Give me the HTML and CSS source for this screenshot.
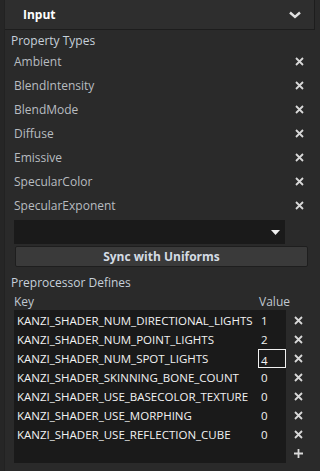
FILE: index.html
```html
<!DOCTYPE html>
<html>
<head>
<meta charset="utf-8">
<link rel="stylesheet" href="styles.css">
</head>
<body>
<div class="panel">
  <div class="gutter"></div>
  <div class="main">
    <div class="header">
      <span class="title">Input</span>
      <svg class="chev" width="12" height="8" viewBox="0 0 12 8"><path d="M1 1.5 L6 6 L11 1.5" fill="none" stroke="#e0e0e0" stroke-width="2.4"/></svg>
    </div>
    <div class="section-label">Property Types</div>
    <div class="prop-list">
      <div class="prop"><span>Ambient</span><svg class="x" width="9" height="9" viewBox="0 0 9 9"><path d="M1 1L8 8M8 1L1 8" stroke="#d8d8d8" stroke-width="1.8"/></svg></div>
      <div class="prop"><span>BlendIntensity</span><svg class="x" width="9" height="9" viewBox="0 0 9 9"><path d="M1 1L8 8M8 1L1 8" stroke="#d8d8d8" stroke-width="1.8"/></svg></div>
      <div class="prop"><span>BlendMode</span><svg class="x" width="9" height="9" viewBox="0 0 9 9"><path d="M1 1L8 8M8 1L1 8" stroke="#d8d8d8" stroke-width="1.8"/></svg></div>
      <div class="prop"><span>Diffuse</span><svg class="x" width="9" height="9" viewBox="0 0 9 9"><path d="M1 1L8 8M8 1L1 8" stroke="#d8d8d8" stroke-width="1.8"/></svg></div>
      <div class="prop"><span>Emissive</span><svg class="x" width="9" height="9" viewBox="0 0 9 9"><path d="M1 1L8 8M8 1L1 8" stroke="#d8d8d8" stroke-width="1.8"/></svg></div>
      <div class="prop"><span>SpecularColor</span><svg class="x" width="9" height="9" viewBox="0 0 9 9"><path d="M1 1L8 8M8 1L1 8" stroke="#d8d8d8" stroke-width="1.8"/></svg></div>
      <div class="prop"><span>SpecularExponent</span><svg class="x" width="9" height="9" viewBox="0 0 9 9"><path d="M1 1L8 8M8 1L1 8" stroke="#d8d8d8" stroke-width="1.8"/></svg></div>
    </div>
    <div class="dropdown">
      <svg width="9" height="5" viewBox="0 0 9 5"><path d="M0 0H9L4.5 5Z" fill="#f0f0f0"/></svg>
    </div>
    <div class="btn">Sync with Uniforms</div>
    <div class="section-label pre">Preprocessor Defines</div>
    <div class="cols"><span>Key</span><span class="vcol">Value</span></div>
    <div class="defines">
      <div class="table">
        <div class="row"><span class="k">KANZI_SHADER_NUM_DIRECTIONAL_LIGHTS</span><span class="v">1</span></div>
        <div class="row"><span class="k">KANZI_SHADER_NUM_POINT_LIGHTS</span><span class="v">2</span></div>
        <div class="row"><span class="k">KANZI_SHADER_NUM_SPOT_LIGHTS</span><span class="v edit">4</span></div>
        <div class="row"><span class="k">KANZI_SHADER_SKINNING_BONE_COUNT</span><span class="v">0</span></div>
        <div class="row"><span class="k">KANZI_SHADER_USE_BASECOLOR_TEXTURE</span><span class="v">0</span></div>
        <div class="row"><span class="k">KANZI_SHADER_USE_MORPHING</span><span class="v">0</span></div>
        <div class="row"><span class="k">KANZI_SHADER_USE_REFLECTION_CUBE</span><span class="v">0</span></div>
      </div>
      <div class="actions">
        <svg class="x" width="9" height="9" viewBox="0 0 9 9"><path d="M1 1L8 8M8 1L1 8" stroke="#d8d8d8" stroke-width="1.8"/></svg>
        <svg class="x" width="9" height="9" viewBox="0 0 9 9"><path d="M1 1L8 8M8 1L1 8" stroke="#d8d8d8" stroke-width="1.8"/></svg>
        <svg class="x" width="9" height="9" viewBox="0 0 9 9"><path d="M1 1L8 8M8 1L1 8" stroke="#d8d8d8" stroke-width="1.8"/></svg>
        <svg class="x" width="9" height="9" viewBox="0 0 9 9"><path d="M1 1L8 8M8 1L1 8" stroke="#d8d8d8" stroke-width="1.8"/></svg>
        <svg class="x" width="9" height="9" viewBox="0 0 9 9"><path d="M1 1L8 8M8 1L1 8" stroke="#d8d8d8" stroke-width="1.8"/></svg>
        <svg class="x" width="9" height="9" viewBox="0 0 9 9"><path d="M1 1L8 8M8 1L1 8" stroke="#d8d8d8" stroke-width="1.8"/></svg>
        <svg class="x" width="9" height="9" viewBox="0 0 9 9"><path d="M1 1L8 8M8 1L1 8" stroke="#d8d8d8" stroke-width="1.8"/></svg>
        <svg class="x" width="9" height="9" viewBox="0 0 9 9"><path d="M4.5 0V9M0 4.5H9" stroke="#d8d8d8" stroke-width="1.8"/></svg>
      </div>
    </div>
  </div>
</div>
</body>
</html>
```

FILE: styles.css
```css
html, body {
  margin: 0;
  padding: 0;
  background: #2a2a2a;
  width: 320px;
  height: 471px;
  overflow: hidden;
  font-family: "Open Sans", "Noto Sans", sans-serif;
}
.panel {
  display: flex;
  height: 471px;
}
.gutter {
  width: 4px;
  background: #262626;
  border-right: 1px solid #222;
}
.main {
  flex: 1;
  display: flex;
  flex-direction: column;
}
.header {
  height: 29px;
  margin-right: 5px;
  background: #2e2e2e;
  border-bottom: 1px solid #1d1d1d;
  border-right: 1px solid #1d1d1d;
  display: flex;
  align-items: center;
  justify-content: space-between;
  padding: 0 13px 0 18px;
}
.title {
  color: #fff;
  font-weight: 700;
  font-size: 12px;
}
.chev { display: block; }
.section-label {
  color: #c6d0da;
  font-size: 12px;
  padding-left: 6px;
  margin-top: 2px;
  height: 17px;
  line-height: 17px;
}
.prop-list {
  display: flex;
  flex-direction: column;
  padding-left: 9px;
  padding-right: 16px;
}
.prop {
  height: 24px;
  display: flex;
  align-items: center;
  justify-content: space-between;
  color: #b8bcc0;
  font-size: 12px;
}
.x { display: block; }
.dropdown {
  margin: 3px 0 0 9px;
  width: 271px;
  height: 24px;
  background: #1a1a1a;
  display: flex;
  align-items: center;
  justify-content: flex-end;
  padding-right: 5px;
  box-sizing: border-box;
}
.dropdown svg { display: block; }
.btn {
  margin: 2px 0 0 10px;
  width: 293px;
  height: 21px;
  box-sizing: border-box;
  background: #3a3a3a;
  border: 1px solid #1e1e1e;
  border-radius: 2px;
  color: #d4dce4;
  font-weight: 700;
  font-size: 12px;
  display: flex;
  align-items: center;
  justify-content: center;
}
.section-label.pre {
  margin-top: 7px;
}
.cols {
  display: flex;
  color: #c0c8d0;
  font-size: 12px;
  padding-left: 9px;
  height: 16px;
  line-height: 16px;
  margin-top: 3px;
}
.vcol { margin-left: auto; margin-right: 30px; }
.defines {
  display: flex;
  padding-left: 9px;
}
.table {
  width: 272px;
  height: 153px;
  background: #1a1a1a;
  display: flex;
  flex-direction: column;
  padding-top: 1px;
  box-sizing: border-box;
}
.row {
  height: 19px;
  display: flex;
  align-items: center;
  color: #f2f2f2;
  font-size: 11.5px;
  padding-left: 3px;
}
.k { width: 241px; white-space: nowrap; overflow: hidden; }
.v {
  width: 28px;
  height: 19px;
  box-sizing: border-box;
  padding-left: 3px;
  line-height: 19px;
}
.v.edit {
  border: 1px solid #f0f0f0;
  padding-left: 2px;
  line-height: 21px;
}
.actions {
  display: flex;
  flex-direction: column;
  align-items: center;
  width: 24px;
  padding-top: 6px;
  gap: 10px;
}
```
